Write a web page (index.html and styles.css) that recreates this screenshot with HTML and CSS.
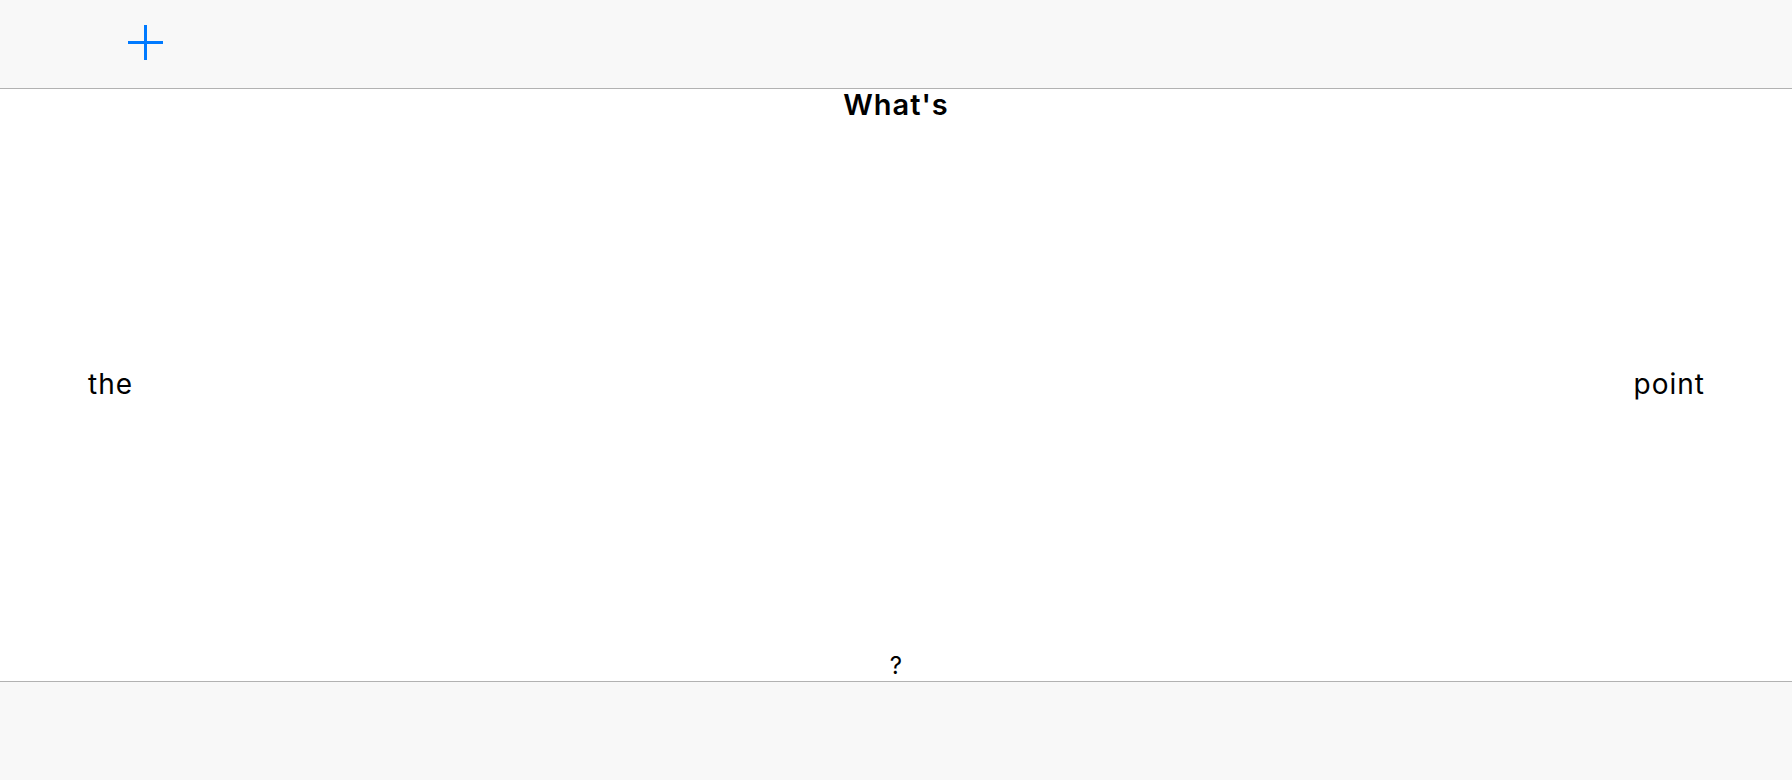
FILE: index.html
```html
<!DOCTYPE html>
<html lang="en">
<head>
<meta charset="utf-8">
<title>What's the point?</title>
<link rel="stylesheet" href="styles.css">
</head>
<body>
<div class="app">
  <header class="topbar">
    <button class="add-btn" aria-label="Add">
      <svg width="35" height="35" viewBox="0 0 35 35" aria-hidden="true">
        <path d="M17.5 0 V35 M0 17.5 H35" stroke="#007aff" stroke-width="3" fill="none"/>
      </svg>
    </button>
  </header>
  <main class="content">
    <div class="title">What's</div>
    <div class="middle">
      <span class="word">the</span>
      <span class="word word-right">point</span>
    </div>
    <div class="question">?</div>
  </main>
  <footer class="bottombar"></footer>
</div>
</body>
</html>
```

FILE: styles.css
```css
html, body {
  margin: 0;
  padding: 0;
  background: #ffffff;
}

body {
  font-family: "Inter", "Noto Sans", "Liberation Sans", sans-serif;
  color: #000000;
}

.app {
  display: flex;
  flex-direction: column;
  height: 780px;
  width: 1792px;
  overflow: hidden;
}

.topbar {
  flex: 0 0 auto;
  background: #f8f8f8;
  border-bottom: 1px solid #b2b2b2;
  display: flex;
  align-items: flex-start;
  padding-left: 128px;
  padding-top: 25px;
  height: 63px;
}

.add-btn {
  border: 0;
  padding: 0;
  margin: 0;
  background: transparent;
  width: 35px;
  height: 35px;
  display: block;
  cursor: pointer;
}

.add-btn svg {
  display: block;
}

.content {
  flex: 1 1 auto;
  display: grid;
  grid-template-rows: 1fr auto 1fr;
  background: #ffffff;
}

.title {
  align-self: start;
  justify-self: center;
  font-size: 29px;
  font-weight: 600;
  line-height: 1.2;
  letter-spacing: 1px;
  margin-top: -1px;
}

.middle {
  display: flex;
  justify-content: space-between;
  align-items: center;
  padding: 0 88px;
}

.word {
  font-size: 28px;
  font-weight: 400;
  line-height: 1.2;
  letter-spacing: 1px;
}

.word-right {
  margin-right: -1px;
}

.question {
  align-self: end;
  justify-self: center;
  font-size: 24px;
  line-height: 1.2;
}

.bottombar {
  flex: 0 0 auto;
  height: 98px;
  background: #f8f8f8;
  border-top: 1px solid #b2b2b2;
}
```
